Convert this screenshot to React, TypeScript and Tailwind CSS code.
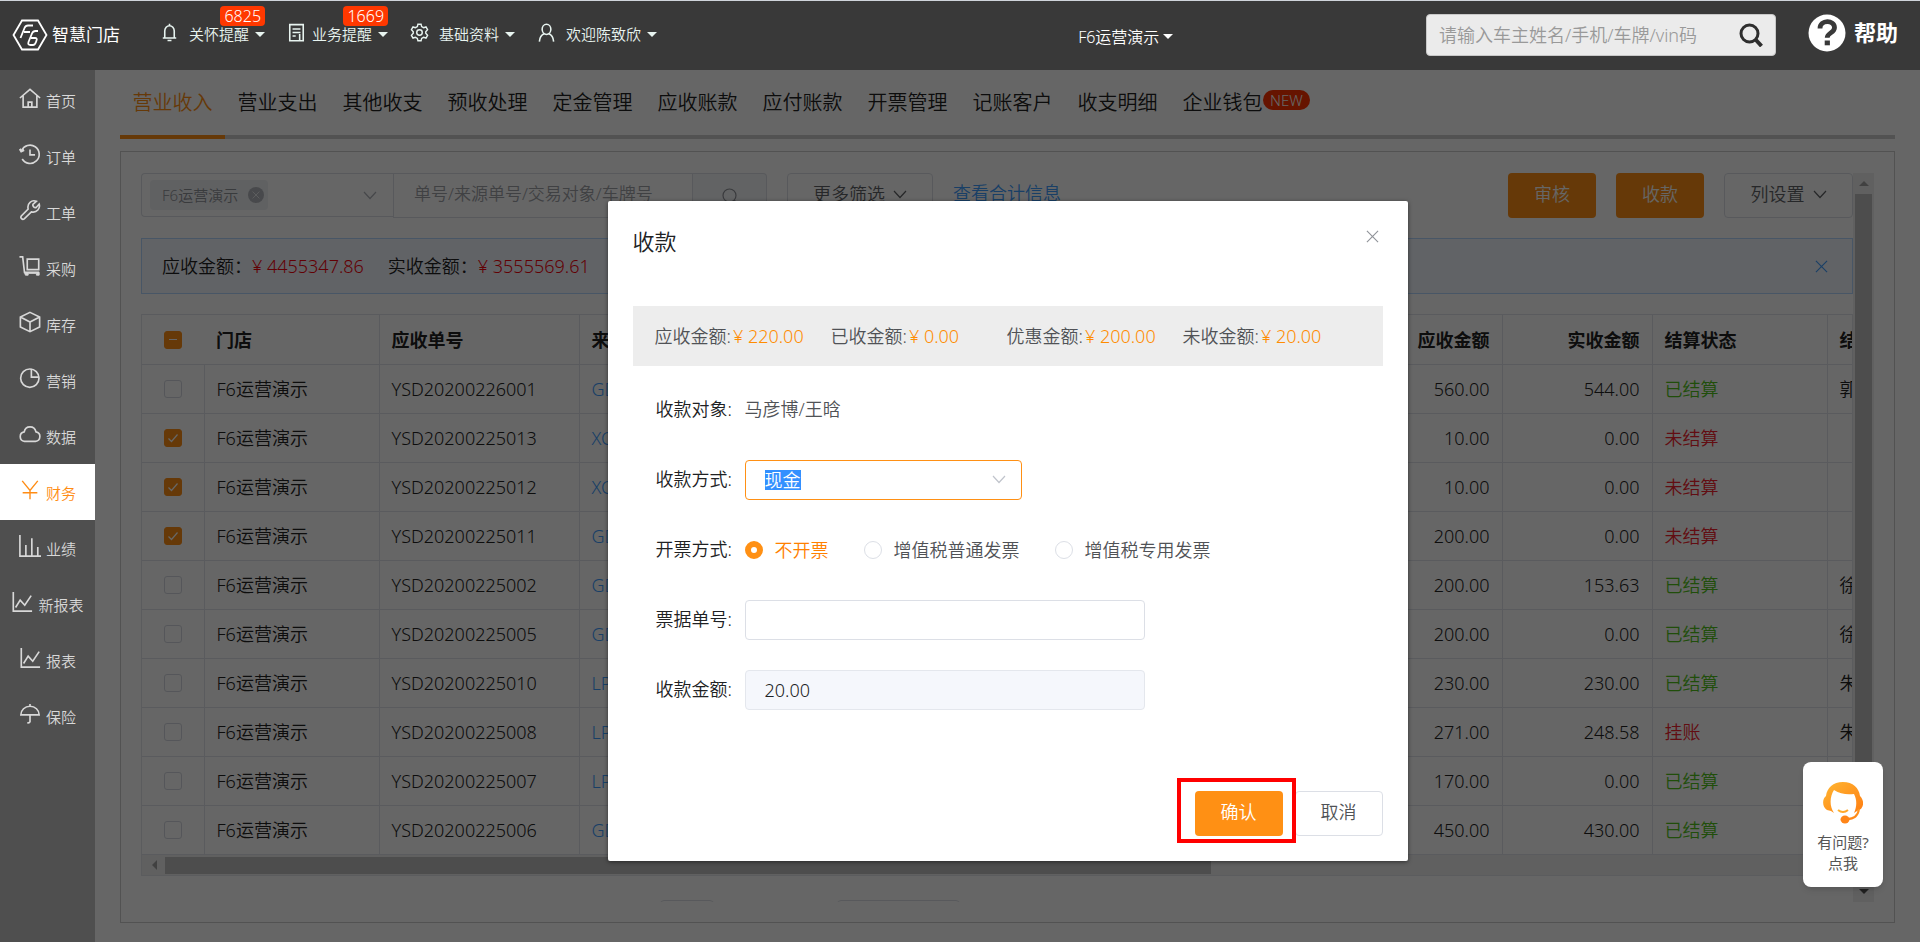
import React from 'react';

type IconProps = { className?: string };

function Stroke({ children, className }: { children: React.ReactNode; className?: string }) {
  return (
    <svg viewBox="0 0 24 24" fill="none" stroke="currentColor" strokeWidth="1.8" className={className} aria-hidden="true">
      {children}
    </svg>
  );
}

const HomeIcon = (p: IconProps) => (
  <Stroke {...p}>
    <path d="M1 12 12 2.500 23 12M4.500 9.500V22h15V9.500M10 22v-5.500h4V22" />
  </Stroke>
);
const OrderIcon = (p: IconProps) => (
  <Stroke {...p}>
    <path d="M2.800 8.500A10 10 0 1 1 3.500 17.500M12 7v6h5.500" />
    <path d="M1 6.500 2.500 9l3-1.500" strokeWidth="2.500" />
  </Stroke>
);
const WrenchIcon = (p: IconProps) => (
  <Stroke {...p}>
    <path d="M19 2.500c-5-2-10.500 2-9 8.500L2.500 18.500a2.300 2.300 0 0 0 3.200 3.200L13.500 14c6 1.500 10-4 8.500-8.500l-3 3.500q-1.500 1-3-.5t-.5-3z" />
  </Stroke>
);
const CartIcon = (p: IconProps) => (
  <Stroke {...p}>
    <path d="M.5 2H4l2 17h16M9 4.500h12.500V16H9z" />
    <path d="M6 19h16v3h-3v-2h-9v2H7z" fill="currentColor" strokeWidth="1" />
  </Stroke>
);
const BoxIcon = (p: IconProps) => (
  <Stroke {...p}>
    <path d="M12 1.500 22.500 6.500v11L12 22.500 1.500 17.500v-11zM1.500 6.500 12 12l10.500-5.500M12 12v10.500" />
  </Stroke>
);
const PieIcon = (p: IconProps) => (
  <Stroke {...p}>
    <circle cx="11.800" cy="12.200" r="10" />
    <path d="M13.500 2v9H22" />
  </Stroke>
);
const CloudIcon = (p: IconProps) => (
  <Stroke {...p}>
    <path d="M6 20a5.200 5.200 0 0 1-.3-10.300C7 2.500 17 2.500 18.500 9.700A5.200 5.200 0 0 1 18 20z" />
  </Stroke>
);
const YenIcon = (p: IconProps) => (
  <Stroke {...p}>
    <path d="M3.500 2 12 12.500 20.500 2M12 12.500V22M4 15h16" strokeWidth="1.500" />
  </Stroke>
);
const BarsIcon = (p: IconProps) => (
  <Stroke {...p}>
    <path d="M1 0v23h23M7.500 22V11M14 22V3.500M20.500 22v-9" />
  </Stroke>
);
const TrendIcon = (p: IconProps) => (
  <Stroke {...p}>
    <path d="M2.500 1v21H23M5 18l5-8 5 5.500 7-10.500" />
  </Stroke>
);
const UmbrellaIcon = (p: IconProps) => (
  <Stroke {...p}>
    <path d="M12 1v2M2 13a10 9.500 0 0 1 20 0zM12 13v7.500q-.5 1.500-3 1" />
  </Stroke>
);
const BellIcon = (p: IconProps) => (
  <Stroke {...p}>
    <path d="M12 1v2.500M6 18.500V10a6 6.500 0 0 1 12 0v8.500M3.500 19h17M9.500 22h5" strokeWidth="2" />
  </Stroke>
);
const DocIcon = (p: IconProps) => (
  <Stroke {...p}>
    <path d="M3.500 2h17v20.500h-17zM7 7.500h10M7 12h10M7 16.500h4M16 14v8" strokeWidth="2" />
  </Stroke>
);
const GearIcon = (p: IconProps) => (
  <Stroke {...p}>
    <path d="M10 1.500h4l.7 3 2.500 1.400 3-.9 2 3.500-2.300 2.500v2l2.300 2.500-2 3.500-3-.9-2.500 1.400-.7 3h-4l-.7-3-2.500-1.400-3 .9-2-3.500 2.300-2.500v-2L1.800 8.500l2-3.500 3 .9 2.500-1.400z" />
    <circle cx="12" cy="12" r="3.500" />
  </Stroke>
);
const UserIcon = (p: IconProps) => (
  <Stroke {...p}>
    <ellipse cx="12" cy="8" rx="5.500" ry="6.500" strokeWidth="2" />
    <path d="M3 23.500c.5-6 3-9 6-10M21 23.500c-.5-6-3-9-6-10" strokeWidth="2" />
  </Stroke>
);
const ChevronIcon = (p: IconProps) => (
  <svg viewBox="0 0 14 14" fill="none" stroke="currentColor" strokeWidth="1.2" aria-hidden="true" {...p}>
    <path d="m1 4 6 6.500L13 4" />
  </svg>
);
const CloseIcon = (p: IconProps) => (
  <svg viewBox="0 0 14 14" fill="none" stroke="currentColor" strokeWidth="1.200" aria-hidden="true" {...p}>
    <path d="m1 1 12 12M13 1 1 13" />
  </svg>
);
const Caret = () => <span className="size-0 border-x-5 border-t-5 border-x-transparent border-t-current" />;

function Logo() {
  return (
    <svg viewBox="0 0 36 32" fill="none" stroke="white" strokeWidth="1.800" className="h-8 w-9" aria-hidden="true">
      <path d="M10 1.500h16L34.500 16 26 30.500H10L1.500 16z" />
      <path d="m8.500 19 4-10q1-2.500 3.500-2.500h5M12 13h6M26 12h-2.500q-2.500 0-3.500 2.500l-3.500 8.500q-1 3 2 3h2.500q2 0 3-3l.5-1.500q1-2.500-1.500-2.500h-4" />
    </svg>
  );
}

function AgentIcon() {
  return (
    <svg viewBox="0 0 40 42" className="h-[42px] w-10" aria-hidden="true">
      <defs>
        <linearGradient id="agent" x1="0" y1="0" x2="1" y2="1">
          <stop offset="0" stopColor="#ffb732" />
          <stop offset="1" stopColor="#ff7d12" />
        </linearGradient>
      </defs>
      <path fill="url(#agent)" d="M20 0C10 0 4 6 3 14c-4 3-4 11 1 14l4 1 3 2C6 24 7 14 11 8c6 4 13 5 20 4 3 6 3 12 0 19l3-2c7-2 8-10 3-15C36 6 30 0 20 0Z" />
      <path fill="none" stroke="url(#agent)" strokeWidth="2" d="M15 28q5 4 10 0M36 27c-1 7-6 10-12 10" />
      <ellipse cx="22" cy="37.500" rx="4.500" ry="4" fill="#ff8518" />
    </svg>
  );
}

const topItems = [
  { label: '关怀提醒', icon: BellIcon, badge: '6825' },
  { label: '业务提醒', icon: DocIcon, badge: '1669', tight: true },
  { label: '基础资料', icon: GearIcon },
  { label: '欢迎陈致欣', icon: UserIcon },
];

const sideItems = [
  { label: '首页', icon: HomeIcon },
  { label: '订单', icon: OrderIcon },
  { label: '工单', icon: WrenchIcon },
  { label: '采购', icon: CartIcon },
  { label: '库存', icon: BoxIcon },
  { label: '营销', icon: PieIcon },
  { label: '数据', icon: CloudIcon },
  { label: '财务', icon: YenIcon, active: true },
  { label: '业绩', icon: BarsIcon },
  { label: '新报表', icon: TrendIcon },
  { label: '报表', icon: TrendIcon },
  { label: '保险', icon: UmbrellaIcon },
];

const tabs = ['营业收入', '营业支出', '其他收支', '预收处理', '定金管理', '应收账款', '应付账款', '开票管理', '记账客户', '收支明细', '企业钱包'];

const rows = [
  { id: 'YSD20200226001', src: 'GD20200226001', due: '560.00', paid: '544.00', state: '已结算', who: '郭' },
  { id: 'YSD20200225013', src: 'XC20200225003', due: '10.00', paid: '0.00', state: '未结算', who: '', checked: true },
  { id: 'YSD20200225012', src: 'XC20200225002', due: '10.00', paid: '0.00', state: '未结算', who: '', checked: true },
  { id: 'YSD20200225011', src: 'GD20200225006', due: '200.00', paid: '0.00', state: '未结算', who: '', checked: true },
  { id: 'YSD20200225002', src: 'GD20200225002', due: '200.00', paid: '153.63', state: '已结算', who: '徐' },
  { id: 'YSD20200225005', src: 'GD20200225003', due: '200.00', paid: '0.00', state: '已结算', who: '徐' },
  { id: 'YSD20200225010', src: 'LP20200225003', due: '230.00', paid: '230.00', state: '已结算', who: '朱' },
  { id: 'YSD20200225008', src: 'LP20200225002', due: '271.00', paid: '248.58', state: '挂账', who: '朱' },
  { id: 'YSD20200225007', src: 'LP20200225001', due: '170.00', paid: '0.00', state: '已结算', who: '' },
  { id: 'YSD20200225006', src: 'GD20200225004', due: '450.00', paid: '430.00', state: '已结算', who: '' },
];

const amounts = [
  ['应收金额', '220.00'],
  ['已收金额', '0.00'],
  ['优惠金额', '200.00'],
  ['未收金额', '20.00'],
];

function TopBar() {
  return (
    <header className="flex h-[70px] shrink-0 items-center border-t border-[#cfd4da] bg-[#393939] pr-[22px] pb-0.5 pl-3 text-[#e8f4f0]">
      <a href="#" className="flex items-center gap-1 text-white">
        <Logo />
        <span className="text-[17px] font-normal">智慧门店</span>
      </a>
      <nav className="ml-10 flex items-center gap-[22px]">
        {topItems.map(({ label, icon: Icon, badge, tight }) => (
          <a
            key={label}
            href="#"
            className={tight ? 'relative flex items-center gap-1.5 text-[15px]' : 'relative flex items-center gap-2.5 text-[15px]'}
          >
            <Icon className="-mt-1 size-[19px]" />
            <span className="flex items-center gap-1.5">
              {label}
              <Caret />
            </span>
            {badge && (
              <span className="absolute right-0 bottom-5 rounded-sm bg-[#ff3800] px-1 text-base leading-5 text-white">{badge}</span>
            )}
          </a>
        ))}
      </nav>
      <div className="flex-[5]" />
      <a href="#" className="flex items-center gap-1 pt-1 text-base text-white">
        F6运营演示
        <Caret />
      </a>
      <div className="flex-[3]" />
      <form className="flex h-[42px] w-[350px] items-center rounded border border-[#c8c8c8] bg-[#ebebeb] pr-3 pl-3">
        <input
          aria-label="搜索"
          placeholder="请输入车主姓名/手机/车牌/vin码"
          className="min-w-0 flex-1 bg-transparent text-lg text-[#333] outline-none placeholder:text-[#999]"
        />
        <button type="button" aria-label="搜索" className="text-[#2e2e2e]">
          <svg viewBox="0 0 24 24" fill="none" stroke="currentColor" strokeWidth="3" className="size-6" aria-hidden="true">
            <circle cx="10.500" cy="10.500" r="8.500" />
            <path d="m16.500 16.500 6 6.500" strokeWidth="4" />
          </svg>
        </button>
      </form>
      <a href="#" className="ml-8 flex items-center gap-2 pb-1 text-[22px] font-bold text-white">
        <svg viewBox="0 0 38 38" className="size-[38px]" aria-hidden="true">
          <circle cx="19" cy="19" r="18.500" fill="white" />
          <path d="M12 14.500c0-9 14.500-9 14.500-.8 0 5-7.300 5.300-7.300 10" fill="none" stroke="#393939" strokeWidth="4.800" />
          <path d="M16.700 26.500h5.200v4.800h-5.200z" fill="#393939" />
        </svg>
        帮助
      </a>
    </header>
  );
}

function SideBar() {
  return (
    <nav className="w-[95px] shrink-0 bg-[#4f4f4f] pt-0.5">
      {sideItems.map(({ label, icon: Icon, active }) => (
        <a
          key={label}
          href="#"
          className={
            active
              ? 'flex h-14 items-center justify-center gap-[5px] bg-white text-[15px] text-[#ff8c14]'
              : 'flex h-14 items-center justify-center gap-[5px] text-[15px] text-[#d8d8d8]'
          }
        >
          <Icon className="-mt-1 size-[22px]" />
          <span className="pt-0.5">{label}</span>
        </a>
      ))}
    </nav>
  );
}

function Check({ label, checked, mixed }: { label: string; checked?: boolean; mixed?: boolean }) {
  return (
    <label className="grid place-items-center">
      <input
        type="checkbox"
        aria-label={label}
        defaultChecked={checked || mixed}
        className="col-start-1 row-start-1 size-[18px] appearance-none rounded-[3px] border border-[#d5d8e0] checked:border-[#ff9014] checked:bg-[#ff9014]"
      />
      {checked && (
        <svg viewBox="0 0 12 12" fill="none" stroke="white" strokeWidth="1.200" className="pointer-events-none col-start-1 row-start-1 size-3" aria-hidden="true">
          <path d="m1.500 6.500 3 3 6-7" />
        </svg>
      )}
      {mixed && <span className="pointer-events-none col-start-1 row-start-1 h-px w-2 bg-white" />}
    </label>
  );
}

function Filters() {
  return (
    <div className="flex h-[45px] items-start">
      <div className="flex h-11 w-[252px] items-center justify-between rounded-l border border-r-0 border-[#dcdfe6] pr-4 pl-2">
        <span className="flex h-[30px] items-center gap-2.5 rounded bg-[#f0f2f5] pr-1 pl-3 text-[15px] text-[#909399]">
          F6运营演示
          <button type="button" aria-label="移除" className="grid size-4 place-items-center rounded-full bg-[#b4b7bd] text-white">
            <CloseIcon className="size-2" />
          </button>
        </span>
        <ChevronIcon className="size-3.5 text-[#b0b3ba]" />
      </div>
      <input
        aria-label="单号"
        placeholder="单号/来源单号/交易对象/车牌号"
        className="h-[45px] w-[300px] border border-[#dcdfe6] px-5 pb-1 text-[17px] outline-none placeholder:text-[#a0a2a8]"
      />
      <button type="button" aria-label="查询" className="grid h-[45px] w-[74px] place-items-center rounded-r border border-l-0 border-[#dcdfe6] bg-[#f5f7fa] text-[#909399]">
        <svg viewBox="0 0 16 16" fill="none" stroke="currentColor" strokeWidth="1.200" className="size-4" aria-hidden="true">
          <circle cx="7.500" cy="7.500" r="6.500" />
          <path d="m12 12 3 3" />
        </svg>
      </button>
      <button type="button" className="ml-5 flex h-[45px] w-[146px] items-center justify-center gap-2 rounded border border-[#dcdfe6] pb-1 text-lg text-[#606266]">
        更多筛选
        <ChevronIcon className="size-3.5" />
      </button>
      <a href="#" className="ml-5 pt-1.5 text-lg text-[#409eff] underline">
        查看合计信息
      </a>
      <div className="ml-auto flex gap-5">
        <button type="button" className="h-[45px] w-[88px] rounded bg-[#ff9014] pb-1 text-lg text-white">
          审核
        </button>
        <button type="button" className="h-[45px] w-[88px] rounded bg-[#ff9014] pb-1 text-lg text-white">
          收款
        </button>
        <button type="button" className="flex h-[45px] w-[129px] items-center justify-center gap-2 rounded border border-[#dcdfe6] pb-1 text-lg text-[#606266]">
          列设置
          <ChevronIcon className="size-3.5" />
        </button>
      </div>
    </div>
  );
}

function Receivables() {
  return (
    <div className="mt-5 border border-t-0 border-[#e3e5ec]">
      <table className="w-full table-fixed border-collapse text-left text-lg text-[#222]">
        <colgroup>
          <col className="w-[62px]" />
          <col className="w-[175px]" />
          <col className="w-[200px]" />
          <col />
          <col className="w-[150px]" />
          <col className="w-[150px]" />
          <col className="w-[175px]" />
          <col className="w-[25px]" />
        </colgroup>
        <thead>
          <tr className="h-[50px] border-y border-[#e0e3ec]">
            <th>
              <Check label="全选" mixed />
            </th>
            <th className="border-r border-[#e0e3ec] px-3 font-bold">门店</th>
            <th className="border-r border-[#e0e3ec] px-3 font-bold">应收单号</th>
            <th className="border-r border-[#e0e3ec] px-3 font-bold">来源单号</th>
            <th className="border-r border-[#e0e3ec] px-3 text-right font-bold">应收金额</th>
            <th className="border-r border-[#e0e3ec] px-3 text-right font-bold">实收金额</th>
            <th className="border-r border-[#e0e3ec] px-3 font-bold">结算状态</th>
            <th className="overflow-hidden pl-3 font-bold whitespace-nowrap">结算人</th>
          </tr>
        </thead>
        <tbody>
          {rows.map((r) => (
            <tr key={r.id} className="h-[49px] border-b border-[#e0e3ec]">
              <td className="border-r border-[#e0e3ec]">
                <Check label={r.id} checked={r.checked} />
              </td>
              <td className="border-r border-[#e0e3ec] px-3">F6运营演示</td>
              <td className="border-r border-[#e0e3ec] px-3">{r.id}</td>
              <td className="border-r border-[#e0e3ec] px-3">
                <a href="#" className="text-[#409eff]">
                  {r.src}
                </a>
              </td>
              <td className="border-r border-[#e0e3ec] px-3 text-right">{r.due}</td>
              <td className="border-r border-[#e0e3ec] px-3 text-right">{r.paid}</td>
              <td className={r.state === '已结算' ? 'border-r border-[#e0e3ec] px-3 text-[#52c41a]' : 'border-r border-[#e0e3ec] px-3 text-[#f5222d]'}>
                {r.state}
              </td>
              <td className="overflow-hidden pl-3 whitespace-nowrap">{r.who}</td>
            </tr>
          ))}
        </tbody>
      </table>
      <div className="flex h-5 items-center bg-[#f1f1f1] pl-2.5">
        <span className="size-0 border-y-5 border-r-5 border-y-transparent border-r-[#a3a3a3]" />
        <div className="ml-2 h-[17px] w-8/13 bg-[#c1c1c1]" />
      </div>
    </div>
  );
}

function Ledger() {
  return (
    <div className="flex flex-1 flex-col px-[25px] pb-[19px]">
      <nav className="flex h-[69px] border-b-4 border-[#cccccc]">
        {tabs.map((tab, i) => (
          <a
            key={tab}
            href="#"
            className={
              i === 0
                ? '-mb-1 flex w-[105px] items-center justify-center border-b-4 border-[#ff9014] text-xl text-[#ff9014]'
                : 'relative flex w-[105px] items-center justify-center text-xl text-[#222]'
            }
          >
            {tab}
            {tab === '企业钱包' && (
              <span className="absolute top-5 left-[93px] rounded-full bg-[#ff3300] px-[7px] text-[15px] leading-5 text-white">NEW</span>
            )}
          </a>
        ))}
      </nav>
      <section className="mt-3 flex flex-1 border border-[#cccccc] px-5 pt-[21px] pb-5">
        <div className="flex h-[729px] min-w-0 flex-1 flex-col overflow-hidden">
          <Filters />
          <div className="mt-5 flex h-14 shrink-0 items-center gap-6 border border-[#b3d8ff] bg-[#f2f7ff] px-5 text-lg text-[#222]">
            <p>
              应收金额：<span className="text-[#f5000a]">¥ 4455347.86</span>
            </p>
            <p>
              实收金额：<span className="text-[#f5000a]">¥ 3555569.61</span>
            </p>
            <button type="button" aria-label="关闭提示" className="mr-1 ml-auto text-[#409eff]">
              <CloseIcon className="size-[13px]" />
            </button>
          </div>
          <Receivables />
          <div className="mt-6 flex shrink-0 gap-[123px] pl-[519px]">
            <div className="h-8 w-[54px] rounded border border-[#dcdfe6]" />
            <div className="h-8 w-[123px] rounded border border-[#dcdfe6]" />
          </div>
        </div>
        <div className="flex h-[729px] w-[21px] flex-col items-center justify-between bg-[#f1f1f1] py-2">
          <span className="size-0 border-x-5 border-b-5 border-x-transparent border-b-[#a3a3a3]" />
          <div className="my-2 w-[17px] flex-1 bg-[#c1c1c1]" />
          <span className="size-0 border-x-5 border-t-5 border-x-transparent border-t-[#505050]" />
        </div>
      </section>
    </div>
  );
}

function PaymentDialog() {
  return (
    <div className="absolute inset-0 flex items-start justify-center bg-black/60 pt-[131px]">
      <div role="dialog" aria-label="收款" className="flex h-[660px] w-[800px] flex-col rounded-xs bg-white px-[25px] pb-[25px] text-lg text-[#505256] shadow-[0_1px_4px_rgba(0,0,0,0.5)]">
        <div className="flex h-[105px] shrink-0 items-start justify-between pt-[23px]">
          <h2 className="text-[22px] text-[#202123]">收款</h2>
          <button type="button" aria-label="关闭" className="mt-1.5 mr-1 text-[#909399]">
            <CloseIcon className="size-[13px]" />
          </button>
        </div>
        <div className="flex h-[60px] shrink-0 items-center bg-[#ededed] pl-[22px]">
          {amounts.map(([name, value]) => (
            <p key={name} className="w-44 whitespace-nowrap">
              {name}:<span className="ml-0.5 text-[#ff8c00]">¥ {value}</span>
            </p>
          ))}
        </div>
        <div className="mt-6 grid auto-rows-[40px] grid-cols-[89px_1fr] gap-y-[30px] pl-[23px]">
          <span className="leading-[38px] text-[#202123]">收款对象:</span>
          <span className="leading-[38px]">马彦博/王晗</span>

          <label htmlFor="method" className="leading-[38px] text-[#202123]">
            收款方式:
          </label>
          <div className="relative w-[277px]">
            <select
              id="method"
              className="h-10 w-full appearance-none rounded border border-[#ff9014] bg-[linear-gradient(#3390ff,#3390ff)] bg-[length:36px_20px] bg-[position:19px_center] bg-no-repeat px-[19px] text-lg text-white outline-none"
            >
              <option className="text-black">现金</option>
            </select>
            <ChevronIcon className="pointer-events-none absolute top-3 right-4 size-3.5 text-[#c0c4cc]" />
          </div>

          <span className="leading-[38px] text-[#202123]">开票方式:</span>
          <div className="flex items-center gap-[35px]">
            {['不开票', '增值税普通发票', '增值税专用发票'].map((name, i) => (
              <label key={name} className={i === 0 ? 'flex items-center gap-3 text-[#ff8000]' : 'flex items-center gap-3'}>
                <input
                  type="radio"
                  name="invoice"
                  defaultChecked={i === 0}
                  className="size-[18px] appearance-none rounded-full border border-[#dcdfe6] checked:border-[6px] checked:border-[#ff9014]"
                />
                {name}
              </label>
            ))}
          </div>

          <label htmlFor="bill" className="leading-[38px] text-[#202123]">
            票据单号:
          </label>
          <input id="bill" className="h-10 w-[400px] rounded border border-[#dcdfe6] px-[19px] outline-none" />

          <label htmlFor="sum" className="leading-[38px] text-[#202123]">
            收款金额:
          </label>
          <input id="sum" readOnly defaultValue="20.00" className="h-10 w-[400px] rounded border border-[#e4e7ed] bg-[#f5f7fc] px-[19px] text-[#202123] outline-none" />
        </div>
        <div className="mt-auto flex justify-end gap-3">
          <div className="relative">
            <button type="button" className="h-[45px] w-[88px] rounded bg-[#ff9014] pb-1 text-white">
              确认
            </button>
            <span className="pointer-events-none absolute -top-[13px] -right-[13px] -bottom-[7px] -left-[18px] z-10 border-4 border-[#ff0000]" />
          </div>
          <button type="button" className="h-[45px] w-[88px] rounded border border-[#dcdfe6] pb-1">
            取消
          </button>
        </div>
      </div>
    </div>
  );
}

export default function App() {
  return (
    <div className="relative flex min-h-screen flex-col border-b border-black bg-white font-['Noto_Sans','Noto_Sans_CJK_SC',sans-serif] font-[350]">
      <TopBar />
      <div className="flex flex-1">
        <SideBar />
        <main className="relative flex min-w-0 flex-1">
          <Ledger />
          <PaymentDialog />
        </main>
      </div>
      <button
        type="button"
        className="absolute right-[37px] bottom-[55px] flex h-[125px] w-20 flex-col items-center rounded-lg bg-white pt-5 text-[15px] leading-[21px] font-normal text-[#555] shadow-md"
      >
        <AgentIcon />
        <span className="mt-2">有问题?</span>
        <span>点我</span>
      </button>
    </div>
  );
}
